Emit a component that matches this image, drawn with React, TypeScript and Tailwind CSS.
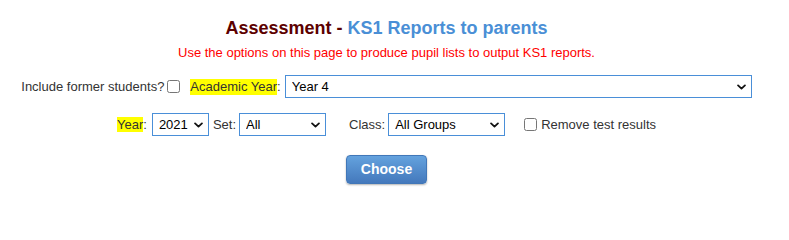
import React from "react";

function Chevron() {
  return (
    <svg className="pointer-events-none absolute right-[6px] top-1/2 -translate-y-1/2 w-[9px] h-[6px]" viewBox="0 0 10 6" fill="none">
      <path d="M1.2 1.2 L5 4.8 L8.8 1.2" stroke="#111" strokeWidth="2" strokeLinecap="round" strokeLinejoin="round" />
    </svg>
  );
}

function Select({ value, width, options }: { value: string; width: string; options: string[] }) {
  return (
    <div className={`relative ${width} h-[23px]`}>
      <select
        defaultValue={value}
        className="appearance-none w-full h-full border border-[#4a8fd8] bg-white pl-[6px] pr-[18px] text-[13px] text-black outline-none font-['Liberation_Sans',Arial,sans-serif]"
      >
        {options.map((o) => (
          <option key={o}>{o}</option>
        ))}
      </select>
      <Chevron />
    </div>
  );
}

function Checkbox() {
  return <input type="checkbox" className="w-[13px] h-[13px] m-0 block" />;
}

export default function App() {
  return (
    <div className="w-[773px] bg-white font-['Liberation_Sans',Arial,sans-serif] text-[13px] text-[#333] pt-[18px] pb-[19px]">
      {/* Header */}
      <h1 className="text-center text-[18px] leading-[21px] font-bold">
        <span className="text-[#5c0000]">Assessment - </span>
        <span className="text-[#4a8fd6]">KS1 Reports to parents</span>
      </h1>
      <p className="mt-[6px] text-center leading-[15px] text-[#ff0000]">
        Use the options on this page to produce pupil lists to output KS1 reports.
      </p>

      {/* Row 1 */}
      <div className="mt-[15px] flex items-center justify-center">
        <span>Include former students?</span>
        <span className="ml-[3px]"><Checkbox /></span>
        <span className="ml-[10px]">
          <span className="bg-[#ffff00] leading-[16px] inline-block">Academic Year</span>:
        </span>
        <div className="ml-[4px]">
          <Select value="Year 4" width="w-[467px]" options={["Year 1", "Year 2", "Year 3", "Year 4", "Year 5", "Year 6"]} />
        </div>
      </div>

      {/* Row 2 */}
      <div className="mt-[15px] flex items-center justify-center">
        <span>
          <span className="bg-[#ffff00] leading-[15px] inline-block">Year</span>:
        </span>
        <div className="ml-[5px]">
          <Select value="2021" width="w-[57px]" options={["2019", "2020", "2021", "2022"]} />
        </div>
        <span className="ml-[4px]">Set:</span>
        <div className="ml-[3px]">
          <Select value="All" width="w-[87px]" options={["All"]} />
        </div>
        <span className="ml-[23px]">Class:</span>
        <div className="ml-[3px]">
          <Select value="All Groups" width="w-[117px]" options={["All Groups"]} />
        </div>
        <span className="ml-[19px]"><Checkbox /></span>
        <span className="ml-[4px]">Remove test results</span>
      </div>

      {/* Button */}
      <div className="mt-[19px] flex justify-center">
        <button className="w-[81px] h-[29px] rounded-[4px] border border-[#4177b8] bg-gradient-to-b from-[#64a2de] to-[#4479bc] text-white text-[14px] font-bold shadow-[0_1px_2px_rgba(0,0,0,0.3)]">
          Choose
        </button>
      </div>
    </div>
  );
}
